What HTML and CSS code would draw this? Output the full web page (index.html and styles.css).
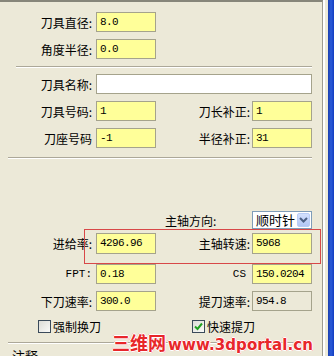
FILE: index.html
```html
<!DOCTYPE html>
<html lang="zh-CN">
<head>
  <meta charset="UTF-8" />
  <title>刀具参数</title>
  <link rel="stylesheet" href="styles.css">
</head>
<body>
  <div class="screen">
    <div class="panel">
      <div class="row r1">
        <span class="lbl">刀具直径:</span><span class="field">8.0</span>
      </div>
      <div class="row r2">
        <span class="lbl">角度半径:</span><span class="field">0.0</span>
      </div>
      <div class="sep sep-a"></div>
      <div class="row r3">
        <span class="lbl">刀具名称:</span><span class="field wide"></span>
      </div>
      <div class="row r4">
        <span class="lbl">刀具号码:</span><span class="field">1</span>
        <span class="rlbl">刀长补正:</span><span class="field">1</span>
      </div>
      <div class="row r5">
        <span class="lbl">刀座号码</span><span class="field">-1</span>
        <span class="rlbl">半径补正:</span><span class="field">31</span>
      </div>
      <div class="sep sep-b"></div>

      <div class="row r6">
        <span class="dir-lbl">主轴方向:</span>
        <span class="combo">顺时针
          <span class="combo-btn">
            <svg width="9" height="6" viewBox="0 0 9 6"><path d="M1 1 L4.5 4.5 L8 1" fill="none" stroke="#4d6185" stroke-width="2"/></svg>
          </span>
        </span>
      </div>
      <div class="row r7">
        <span class="lbl">进给率:</span><span class="field tall">4296.96</span>
        <span class="rlbl">主轴转速:</span><span class="field tall">5968</span>
      </div>
      <div class="row r8">
        <span class="lbl latin">FPT:</span><span class="field">0.18</span>
        <span class="rlbl latin cs">CS</span><span class="field">150.0204</span>
      </div>
      <div class="row r9">
        <span class="lbl">下刀速率:</span><span class="field">300.0</span>
        <span class="rlbl">提刀速率:</span><span class="field off">954.8</span>
      </div>
      <div class="row r10">
        <span class="check first"><span class="box"></span>强制换刀</span>
        <span class="check second"><span class="box">
          <svg width="9" height="9" viewBox="0 0 9 9"><path d="M1 4.5 L3.5 7 L8 1.5" fill="none" stroke="#21a121" stroke-width="2"/></svg>
        </span>快速提刀</span>
      </div>
      <div class="sep sep-c"></div>
      <div class="note">注释</div>

      <div class="mark-box"></div>
      <div class="watermark"><span class="wm-cn">三维网</span><span class="wm-url">www.3dportal.cn</span></div>
    </div>
    <div class="rail"></div>
    <div class="bar"></div>
  </div>
</body>
</html>
```

FILE: styles.css
```css
* {
  box-sizing: border-box;
}
body {
  margin: 0;
  background: #ece9d8;
  font-family: "Noto Sans CJK SC", "DejaVu Sans", sans-serif;
  font-size: 12px;
  color: #000;
}
.screen {
  display: flex;
  width: 334px;
  height: 356px;
  overflow: hidden;
}
.panel {
  position: relative;
  width: 323px;
  height: 356px;
  border-top: 2px solid #87867a;
  border-right: 1px solid #9d9c90;
}
.rail {
  width: 5px;
  border-left: 2px solid #fff;
  background: #ece9d8;
}
.bar {
  flex: 1;
  background: linear-gradient(to right, #1b3fae, #2a5ad8, #123cc0);
}
.row {
  display: flex;
  align-items: center;
  height: 20px;
}
.lbl {
  width: 92px;
  margin-right: 4px;
  text-align: right;
  white-space: nowrap;
}
.rlbl {
  width: 96px;
  text-align: right;
  padding-right: 2px;
  white-space: nowrap;
}
.latin {
  font-family: "Liberation Mono", monospace;
  font-size: 11px;
}
.cs {
  padding-right: 6px;
}
.field {
  width: 60px;
  height: 100%;
  background: #ffff99;
  border: 1px solid #a5a38c;
  padding-left: 3px;
  font-family: "Liberation Mono", monospace;
  font-size: 11px;
  letter-spacing: -0.6px;
  line-height: 18px;
}
.field.wide {
  width: 216px;
  background: #fff;
}
.field.off {
  background: #ece9d8;
}
.tall {
  line-height: 19px;
}
.r1 { margin-top: 10px; }
.r2 { margin-top: 7px; }
.r3 { margin-top: 6px; }
.r4 { margin-top: 7px; }
.r5 { margin-top: 7px; }
.r6 { margin-top: 52px; height: 18px; }
.r7 { margin-top: 4px; height: 21px; }
.r8 { margin-top: 10px; }
.r9 { margin-top: 7px; }
.r10 { margin-top: 7px; height: 16px; }
.sep {
  height: 2px;
  border-top: 1px solid #aca899;
  border-bottom: 1px solid #fff;
}
.sep-a {
  margin: 7px 0 0 16px;
  width: 296px;
}
.sep-b {
  margin: 9px 0 0 8px;
  width: 304px;
}
.sep-c {
  margin: 8px 0 0 8px;
  width: 304px;
}
.dir-lbl {
  margin-left: 165px;
  width: 87px;
}
.combo {
  display: flex;
  align-items: center;
  justify-content: space-between;
  width: 60px;
  height: 100%;
  background: #fff;
  border: 1px solid #7f9db9;
  padding: 0 1px 0 3px;
  font-size: 13px;
  line-height: 16px;
}
.combo-btn {
  display: flex;
  align-items: center;
  justify-content: center;
  width: 13px;
  height: 14px;
  border-radius: 2px;
  background: linear-gradient(#d3e0fd, #b2c7f5);
  border: 1px solid #b9cdf6;
}
.check {
  display: flex;
  align-items: center;
  gap: 2px;
  font-size: 12px;
}
.check.first {
  margin-left: 38px;
}
.check.second {
  margin-left: 91px;
}
.box {
  display: flex;
  align-items: center;
  justify-content: center;
  width: 13px;
  height: 13px;
  border: 1px solid #3a4a5a;
  background: linear-gradient(135deg, #dcdcd6, #fafaf8);
}
.note {
  margin: 2px 0 0 12px;
  font-size: 13px;
}
.mark-box {
  position: absolute;
  left: 84px;
  top: 227px;
  width: 237px;
  height: 35px;
  border: 1px solid #d84848;
}
.watermark {
  position: absolute;
  left: 112px;
  top: 327px;
  display: flex;
  align-items: baseline;
  color: #e8262a;
  font-weight: bold;
  text-shadow: 1px 0 0 #fff, -1px 0 0 #fff, 0 1px 0 #fff, 0 -1px 0 #fff, 1px 1px 0 #fbb, -1px -1px 0 #fbb;
}
.wm-cn {
  font-size: 18px;
}
.wm-url {
  font-family: "DejaVu Sans", sans-serif;
  font-size: 15px;
  letter-spacing: 0.1px;
  margin-left: 2px;
}
```
